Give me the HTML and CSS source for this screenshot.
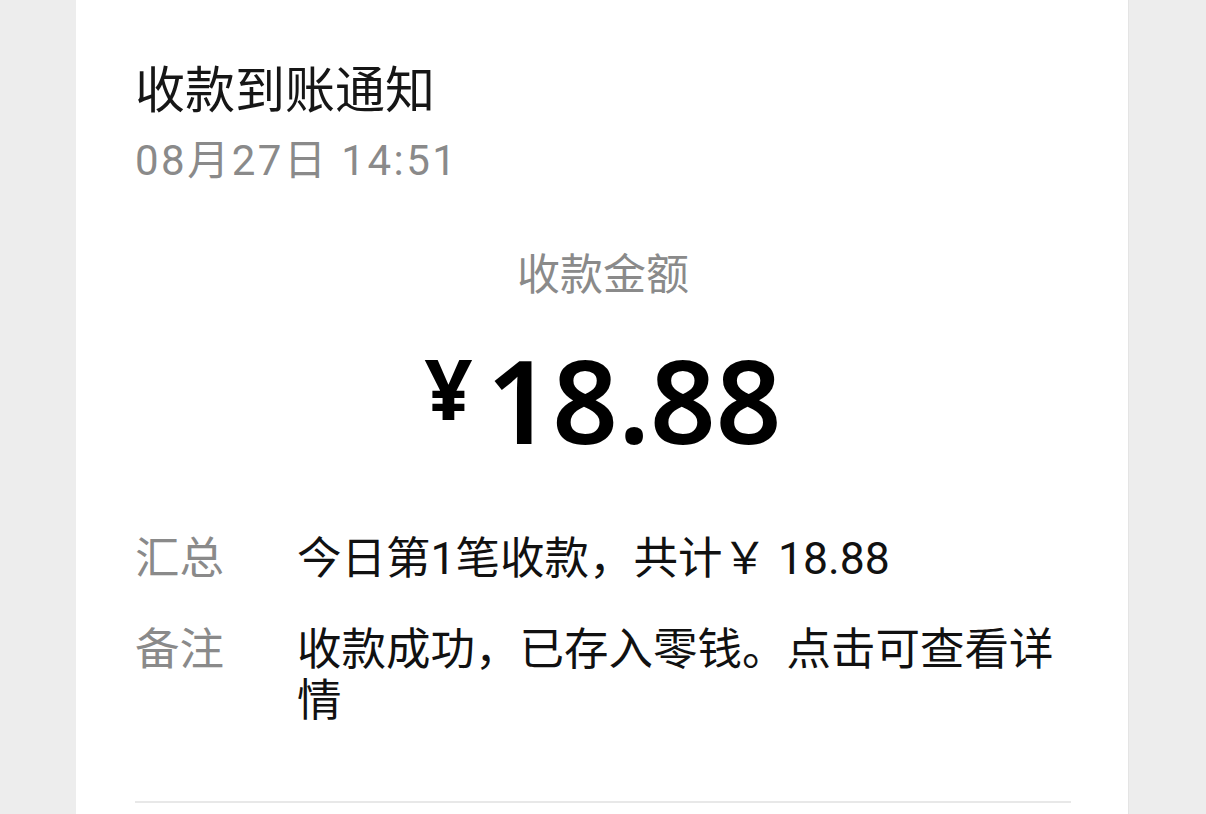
FILE: index.html
```html
<!DOCTYPE html>
<html lang="zh-CN">
<head>
  <meta charset="UTF-8" />
  <meta name="viewport" content="width=device-width, initial-scale=1.0"/>
  <title>收款到账通知</title>
  <link rel="stylesheet" href="styles.css">
</head>
<body>

  <div class="card">
    <h1 class="title">收款到账通知</h1>
    <p class="date">08月27日 14:51</p>

    <div class="amount-box">
      <p class="amount-label">收款金额</p>
      <p class="amount"><span class="currency">¥</span><span class="value">18.88</span></p>
    </div>

    <div class="details">
      <div class="row">
        <span class="key">汇总</span>
        <span class="val">今日第1笔收款，共计￥ 18.88</span>
      </div>
      <div class="row">
        <span class="key">备注</span>
        <span class="val">收款成功，已存入零钱。点击可查看详情</span>
      </div>
    </div>

    <div class="divider"></div>
  </div>

</body>
</html>
```

FILE: styles.css
```css
body {
  font-family: "Noto Sans CJK SC", "Noto Sans", sans-serif;
  background: #ededed;
  margin: 0;
  padding: 0;
  color: #111;
}

.card {
  width: 1053px;
  margin: 0 0 0 76px;
  background: #ffffff;
  border-right: 1px solid #e4e4e4;
  padding: 52px 57px 0 59px;
  box-sizing: border-box;
  height: 100vh;
  overflow: hidden;
}

.title {
  font-size: 50px;
  font-weight: 400;
  line-height: 69px;
  margin: 0;
  color: #161616;
}

.date {
  font-family: Roboto, "Noto Sans CJK SC", sans-serif;
  font-size: 42px;
  line-height: 59px;
  letter-spacing: 2.5px;
  margin: 10px 0 0;
  color: #8a8a8a;
}

.amount-box {
  text-align: center;
  margin-top: 51px;
}

.amount-label {
  font-size: 43px;
  line-height: 60px;
  margin: 0;
  color: #8a8a8a;
}

.amount {
  display: flex;
  justify-content: center;
  align-items: center;
  margin: 34px 0 0;
  color: #000;
}

.currency {
  font-family: "Noto Sans", sans-serif;
  font-size: 84px;
  font-weight: 700;
  line-height: 1;
  margin: 0 14px 24px 0;
}

.value {
  font-family: "Noto Sans", sans-serif;
  font-size: 115px;
  font-weight: 600;
  line-height: 130px;
}

.details {
  margin-top: 69px;
  display: flex;
  flex-direction: column;
  gap: 40px;
}

.row {
  display: grid;
  grid-template-columns: 162px 1fr;
  font-family: Roboto, "Noto Sans CJK SC", sans-serif;
  font-size: 44.5px;
  line-height: 51px;
}

.key {
  color: #8a8a8a;
}

.val {
  color: #111;
}

.divider {
  height: 2px;
  background: #e8e8e8;
  margin-top: 74px;
}
```
